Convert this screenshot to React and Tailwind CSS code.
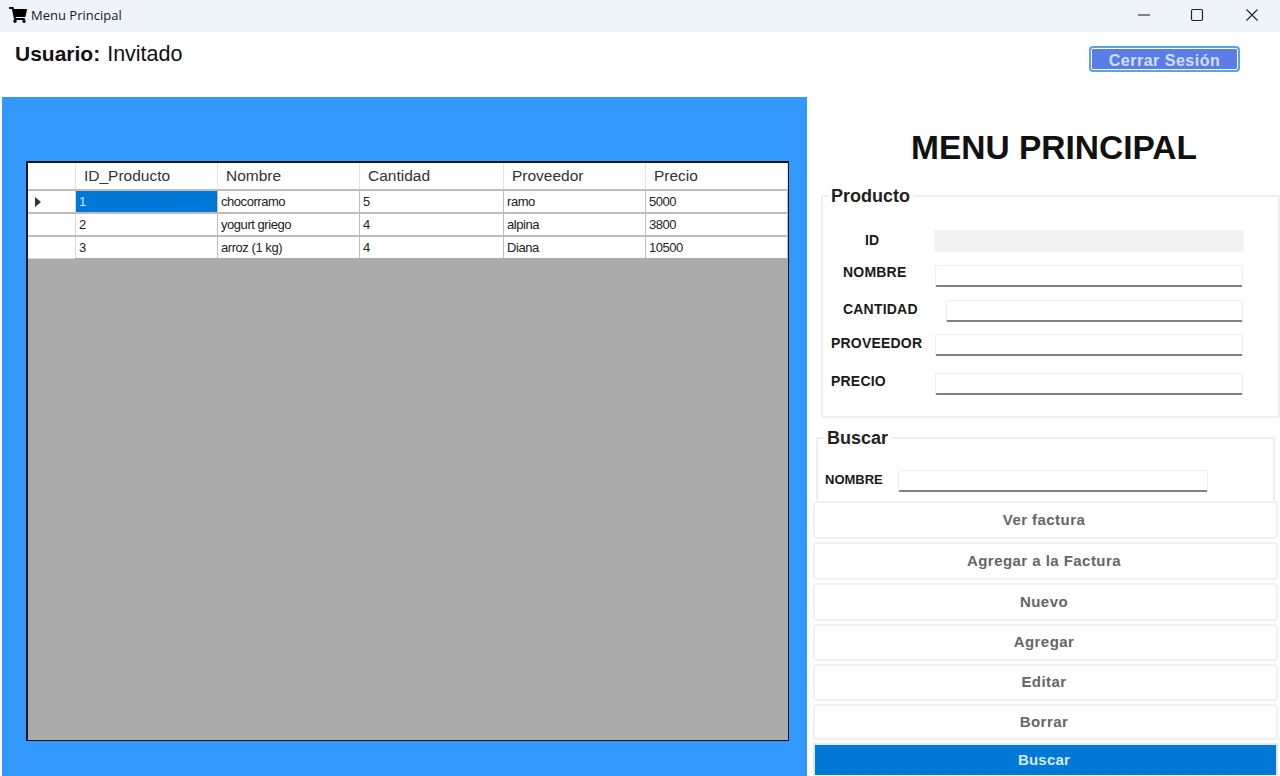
import React from "react";
import { FaShoppingCart } from "react-icons/fa";

const columns = [
  { label: "ID_Producto", w: "w-[142px]", key: "id" },
  { label: "Nombre", w: "w-[142px]", key: "nombre" },
  { label: "Cantidad", w: "w-[144px]", key: "cantidad" },
  { label: "Proveedor", w: "w-[142px]", key: "proveedor" },
  { label: "Precio", w: "w-[142px]", key: "precio" },
];

const rows = [
  { id: "1", nombre: "chocorramo", cantidad: "5", proveedor: "ramo", precio: "5000" },
  { id: "2", nombre: "yogurt griego", cantidad: "4", proveedor: "alpina", precio: "3800" },
  { id: "3", nombre: "arroz (1 kg)", cantidad: "4", proveedor: "Diana", precio: "10500" },
];

const buttons = [
  { label: "Ver factura", h: "h-[38px]" },
  { label: "Agregar a la Factura", h: "h-[38px]" },
  { label: "Nuevo", h: "h-[38px]" },
  { label: "Agregar", h: "h-[37px]" },
  { label: "Editar", h: "h-[37px]" },
  { label: "Borrar", h: "h-[36px]" },
];

const Input = ({ className = "" }) => (
  <div className={`h-[22px] bg-white border border-[#eeeeee] border-b-2 border-b-[#808080] rounded-[2px] ${className}`} />
);

const FormRow = ({ label, labelClass, inputClass, rowClass }) => (
  <div className={`flex items-start ${rowClass}`}>
    <span className={`text-[14px] leading-[14px] font-bold tracking-[0.2px] text-[#1a1a1a] ${labelClass}`}>{label}</span>
    <Input className={inputClass} />
  </div>
);

export default function App() {
  return (
    <div className="w-[1280px] h-[776px] flex flex-col overflow-hidden bg-white font-['Liberation_Sans',Arial,sans-serif]">
      {/* Title bar */}
      <div className="h-8 shrink-0 flex items-center bg-[#eff4fa] pl-[9px]">
        <FaShoppingCart className="text-[18px] text-black -mt-[2px]" />
        <span className="ml-1 -mt-[1px] text-[13px] text-[#1a1a1a] font-['Open_Sans',sans-serif]">Menu Principal</span>
        <div className="ml-auto -mt-[2px] flex items-center pr-[20px]">
          <svg width="16" height="16" viewBox="0 0 16 16" fill="none" stroke="#222" strokeWidth="1.1">
            <path d="M2 8h12" />
          </svg>
          <svg className="ml-[37px]" width="16" height="16" viewBox="0 0 16 16" fill="none" stroke="#222" strokeWidth="1.2">
            <rect x="2.5" y="2.5" width="11" height="11" rx="1.5" />
          </svg>
          <svg className="ml-[39px]" width="16" height="16" viewBox="0 0 16 16" fill="none" stroke="#222" strokeWidth="1.1">
            <path d="M2.5 2.5l11 11M13.5 2.5l-11 11" />
          </svg>
        </div>
      </div>

      {/* User bar */}
      <div className="h-[65px] shrink-0 flex items-start pl-[15px] pr-[40px]">
        <p className="mt-[10px] text-[21.5px] leading-[24px] text-[#111111]">
          <span className="font-bold text-[21px] mr-[1px]">Usuario:</span> Invitado
        </p>
        <button className="ml-auto mt-[14px] pt-[1px] w-[151px] h-[26px] rounded-[4px] border-2 border-[#5ba3dc] bg-[#5b7de8] outline outline-1 -outline-offset-3 outline-white text-[16px] font-bold tracking-[0.5px] text-[#cfe0fb]">
          Cerrar Sesión
        </button>
      </div>

      <div className="flex-1 flex min-h-0">
        {/* Grid panel */}
        <div className="ml-[2px] w-[805px] bg-[#3399ff] pt-[64px] pb-[35px] pl-[24px] pr-[18px]">
          <div className="h-full bg-[#ababab] border-2 border-[#161616] border-r-[1px] border-b-[1px]">
            <div className="flex h-[26px] bg-white">
              <div className="w-[48px] border-r border-[#e3e3e3]" />
              {columns.map(col => (
                <div key={col.key} className={`${col.w} border-r border-[#e3e3e3] pl-[8px] text-[15.5px] leading-[26px] text-[#333333]`}>
                  {col.label}
                </div>
              ))}
            </div>
            {rows.map((row, i) => (
              <div key={row.id} className="flex h-[23px] bg-white border-t-2 border-[#bdbdbd]">
                <div className="w-[48px] bg-white border-r border-[#d8d8d8] flex items-center pl-[7px]">
                  {i === 0 && (
                    <svg width="6" height="10" viewBox="0 0 6 10" fill="#333333">
                      <path d="M0 0l6 5-6 5z" />
                    </svg>
                  )}
                </div>
                {columns.map(col => (
                  <div
                    key={col.key}
                    className={`${col.w} border-r border-[#bdbdbd] pl-[3px] text-[13px] leading-[21px] tracking-[-0.45px] ${
                      i === 0 && col.key === "id" ? "bg-[#0078d7] text-[#cfe6fa]" : "text-[#222222]"
                    }`}
                  >
                    {row[col.key]}
                  </div>
                ))}
              </div>
            ))}
            <div className="h-[1px] w-[47px] bg-[#d8d8d8]" />
          </div>
        </div>

        {/* Form panel */}
        <div className="w-[473px] flex flex-col">
          <h1 className="mt-[34px] pl-[104px] text-[33.5px] leading-[34px] font-bold text-[#111111]">MENU PRINCIPAL</h1>

          <fieldset className="mt-[21px] ml-[14px] w-[459px] h-[232px] border-2 border-[#eeeeee] rounded-[2px] pl-[8px] min-w-0">
            <legend className="-ml-[3px] px-[3px] text-[18px] leading-[20px] font-bold text-[#222222]">Producto</legend>
            <FormRow rowClass="mt-[24px]" label="ID" labelClass="pl-[34px] w-[103px] pt-[3px]" inputClass="w-[310px] !bg-[#f0f0f0] !border-[#f4f4f4]" />
            <FormRow rowClass="mt-[13px]" label="NOMBRE" labelClass="pl-[12px] w-[104px]" inputClass="w-[308px]" />
            <FormRow rowClass="mt-[13px]" label="CANTIDAD" labelClass="pl-[12px] w-[115px] pt-[2px]" inputClass="w-[297px]" />
            <FormRow rowClass="mt-[12px]" label="PROVEEDOR" labelClass="w-[104px] pt-[2px]" inputClass="w-[308px]" />
            <FormRow rowClass="mt-[17px]" label="PRECIO" labelClass="w-[104px] pt-[1px]" inputClass="w-[308px]" />
          </fieldset>

          <fieldset className="mt-[10px] ml-[9px] w-[459px] h-[73px] shrink-0 border-2 border-b-0 border-[#eeeeee] rounded-[2px] pl-[7px] min-w-0">
            <legend className="-ml-[1px] px-[3px] text-[18px] leading-[20px] font-bold text-[#222222]">Buscar</legend>
            <div className="flex items-center mt-[22px]">
              <span className="w-[73px] pb-[2px] text-[13px] font-bold text-[#1a1a1a]">NOMBRE</span>
              <Input className="w-[310px]" />
            </div>
          </fieldset>

          <div className="flex flex-col gap-[3px] pl-[6px] pr-[2px]">
            {buttons.map(b => (
              <button key={b.label} className={`${b.h} w-full pr-[3px] bg-white border-2 border-[#f0f0f0] rounded-[4px] text-[15px] font-bold tracking-[0.45px] text-[#666666]`}>
                {b.label}
              </button>
            ))}
            <button className="h-[32px] w-full pr-[3px] bg-[#0078d7] border-2 border-b-0 border-[#dcebf7] rounded-t-[2px] text-[15px] font-bold tracking-[0.2px] text-[#d5eafc]">
              Buscar
            </button>
          </div>
        </div>
      </div>
    </div>
  );
}
